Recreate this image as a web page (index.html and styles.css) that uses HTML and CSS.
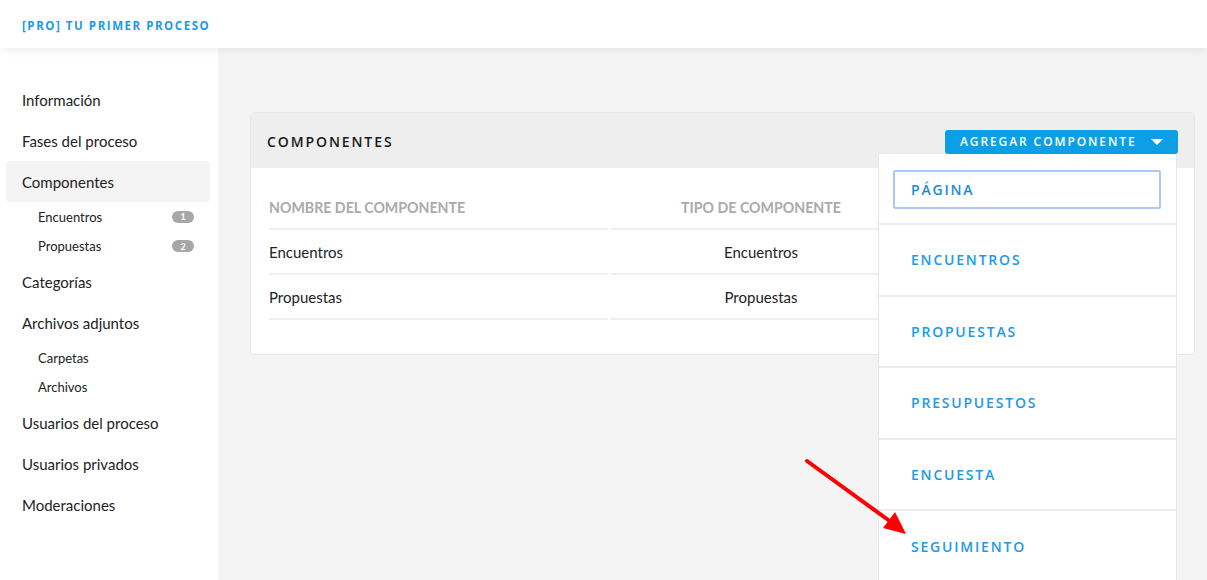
FILE: index.html
```html
<!DOCTYPE html>
<html lang="es">
<head>
<meta charset="utf-8">
<title>[PRO] Tu primer proceso</title>
<link rel="stylesheet" href="styles.css">
</head>
<body>
<header class="topbar">
  <span class="topbar-title">[PRO] TU PRIMER PROCESO</span>
</header>
<div class="layout">
  <aside class="sidebar">
    <nav class="nav">
      <a class="nav-item">Información</a>
      <a class="nav-item">Fases del proceso</a>
      <a class="nav-item is-active">Componentes</a>
      <a class="nav-sub">Encuentros <span class="badge">1</span></a>
      <a class="nav-sub">Propuestas <span class="badge">2</span></a>
      <a class="nav-item">Categorías</a>
      <a class="nav-item">Archivos adjuntos</a>
      <a class="nav-sub">Carpetas</a>
      <a class="nav-sub">Archivos</a>
      <a class="nav-item">Usuarios del proceso</a>
      <a class="nav-item">Usuarios privados</a>
      <a class="nav-item">Moderaciones</a>
    </nav>
  </aside>
  <main class="main">
    <section class="card">
      <div class="card-header">
        <h2 class="card-title">COMPONENTES</h2>
        <div class="add-wrap">
          <button class="add-btn">AGREGAR COMPONENTE <span class="caret"></span></button>
          <ul class="dropdown">
            <li class="dd-item"><span class="dd-focus">PÁGINA</span></li>
            <li class="dd-item">ENCUENTROS</li>
            <li class="dd-item">PROPUESTAS</li>
            <li class="dd-item">PRESUPUESTOS</li>
            <li class="dd-item">ENCUESTA</li>
            <li class="dd-item">SEGUIMIENTO</li>
          </ul>
        </div>
      </div>
      <div class="card-body">
        <div class="table">
          <div class="th">NOMBRE DEL COMPONENTE</div>
          <div class="th center">TIPO DE COMPONENTE</div>
          <div class="th"></div>
          <div class="td">Encuentros</div>
          <div class="td center">Encuentros</div>
          <div class="td"></div>
          <div class="td">Propuestas</div>
          <div class="td center">Propuestas</div>
          <div class="td"></div>
        </div>
      </div>
    </section>
  </main>
</div>
<svg class="annotation" width="1207" height="580" viewBox="0 0 1207 580">
  <line x1="807" y1="461" x2="891" y2="522" stroke="#ff0000" stroke-width="4" stroke-linecap="round"/>
  <polygon points="906,534 883,528 895,512" fill="#ff0000"/>
</svg>
</body>
</html>
```
FILE: styles.css
```css
html, body {
  margin: 0;
  padding: 0;
  height: 100%;
  overflow: hidden;
}
body {
  background: #f4f4f4;
  font-family: Lato, "Open Sans", sans-serif;
  color: #222;
  position: relative;
}
.topbar {
  height: 48px;
  background: #fff;
  display: flex;
  align-items: center;
  padding-left: 22px;
  box-shadow: 0 2px 10px rgba(0,0,0,0.07);
  position: relative;
  z-index: 2;
}
.topbar-title {
  font-family: "Open Sans", sans-serif;
  font-weight: 700;
  font-size: 11.5px;
  letter-spacing: 1.55px;
  color: #2199e8;
  margin-top: 2px;
}
.layout {
  display: flex;
  height: 532px;
}
.sidebar {
  width: 218px;
  background: #fff;
  flex-shrink: 0;
  padding-top: 31px;
  box-sizing: border-box;
}
.nav {
  display: flex;
  flex-direction: column;
  margin: 0 8px 0 6px;
}
.nav-item {
  height: 41px;
  display: flex;
  align-items: center;
  padding-left: 16px;
  font-size: 15px;
  color: #222;
  border-radius: 4px;
}
.nav-item.is-active {
  background: #f4f4f4;
}
.nav-sub {
  height: 29.5px;
  display: flex;
  align-items: center;
  justify-content: space-between;
  padding: 0 16px 0 32px;
  font-size: 13px;
  color: #222;
}
.badge {
  width: 22px;
  height: 12px;
  border-radius: 6px;
  background: #a7a7a7;
  color: #fff;
  font-size: 9px;
  font-weight: 700;
  display: flex;
  align-items: center;
  justify-content: center;
  line-height: 1;
}
.main {
  flex: 1;
  padding: 64px 12px 0 32px;
}
.card {
  background: #fff;
  border: 1px solid #e8e8e8;
  border-radius: 4px;
}
.card-header {
  height: 55px;
  background: #eeeeee;
  display: flex;
  align-items: center;
  justify-content: space-between;
  padding: 0 16px 0 16px;
  border-radius: 4px 4px 0 0;
}
.card-title {
  margin: 0;
  font-family: "Open Sans", sans-serif;
  font-weight: 600;
  font-size: 14px;
  letter-spacing: 1.9px;
  color: #1a1a1a;
  margin-top: 1px;
}
.add-wrap {
  position: relative;
  margin-top: 2px;
}
.add-btn {
  width: 233px;
  height: 24px;
  border: 0;
  border-radius: 3px;
  background: #0d9fe6;
  color: #fff;
  font-family: "Open Sans", sans-serif;
  font-weight: 600;
  font-size: 12px;
  letter-spacing: 1.9px;
  display: flex;
  align-items: center;
  justify-content: space-between;
  padding: 0 15px 0 15px;
  box-sizing: border-box;
}
.caret {
  width: 0;
  height: 0;
  border-left: 6px solid transparent;
  border-right: 6px solid transparent;
  border-top: 6px solid #fff;
}
.dropdown {
  position: absolute;
  top: 24px;
  right: 1px;
  width: 299px;
  margin: 0;
  padding: 0;
  list-style: none;
  background: #fff;
  border-left: 1px solid #e6e6e6;
  border-right: 1px solid #e6e6e6;
  box-sizing: border-box;
  z-index: 5;
}
.dd-item {
  height: 71.5px;
  display: flex;
  align-items: center;
  padding-left: 32px;
  border-bottom: 2px solid #ececec;
  box-sizing: border-box;
  font-family: "Open Sans", sans-serif;
  font-weight: 600;
  font-size: 14px;
  letter-spacing: 1.8px;
  color: #2199e8;
}
.dd-item:first-child {
  padding: 16px 15px 16px 14px;
  align-items: flex-start;
}
.dd-item:last-child {
  border-bottom: 0;
}
.dd-focus {
  flex: 1;
  height: 39px;
  border: 2px solid #a9c9fb;
  border-radius: 2px;
  box-sizing: border-box;
  display: flex;
  align-items: center;
  padding-left: 16px;
  color: #1d8ad6;
}
.card-body {
  padding: 18px 18px 34px 18px;
}
.table {
  display: grid;
  grid-template-columns: 339px 300px 1fr;
  column-gap: 3px;
}
.th, .td {
  border-bottom: 2px solid #efefef;
  display: flex;
  align-items: center;
}
.th {
  height: 42px;
  font-size: 14.2px;
  font-weight: 700;
  color: #aaaaaa;
}
.td {
  height: 43px;
  font-size: 15px;
  color: #222;
}
.center {
  justify-content: center;
}
.annotation {
  position: absolute;
  left: 0;
  top: 0;
  pointer-events: none;
  z-index: 10;
}
```
